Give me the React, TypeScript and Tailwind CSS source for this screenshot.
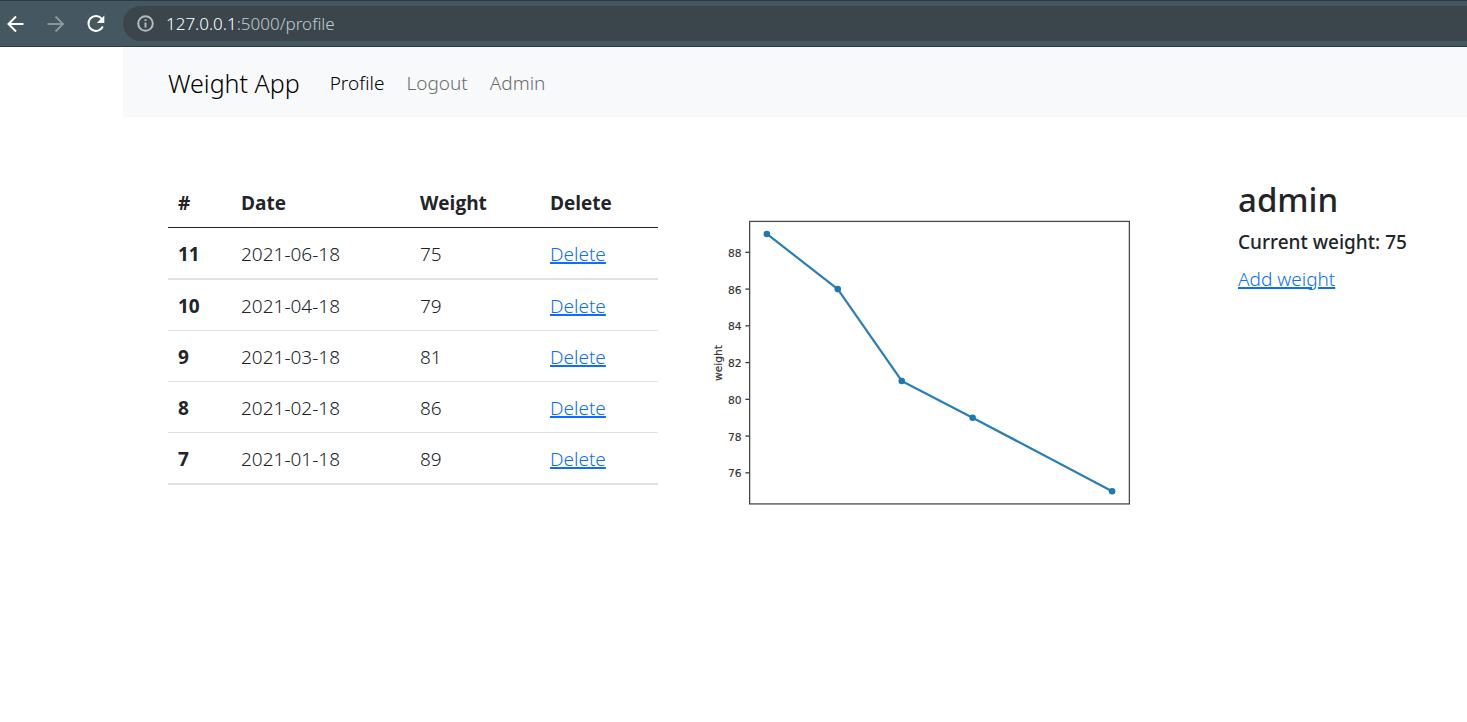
type Entry = { id: number; date: string; weight: number };

const entries: Entry[] = [
  { id: 11, date: "2021-06-18", weight: 75 },
  { id: 10, date: "2021-04-18", weight: 79 },
  { id: 9, date: "2021-03-18", weight: 81 },
  { id: 8, date: "2021-02-18", weight: 86 },
  { id: 7, date: "2021-01-18", weight: 89 },
];

const DAY = 86400000;

function BrowserBar() {
  return (
    <header className="flex h-[47px] items-center border-t border-b border-t-[#2f3a40] border-b-[#2d383e] bg-[#455761]">
      <div className="flex w-[123px] shrink-0 items-center gap-4 pl-1">
        <button type="button" aria-label="Back" className="text-white">
          <svg width="24" height="24" viewBox="0 0 24 24" fill="none" stroke="currentColor" strokeWidth="2">
            <path d="M19.5 12H4.8M12 4.5L4.5 12l7.500 7.500" />
          </svg>
        </button>
        <button type="button" aria-label="Forward" className="text-[#8b969c]">
          <svg width="24" height="24" viewBox="0 0 24 24" fill="none" stroke="currentColor" strokeWidth="2">
            <path d="M3.500 12h15.200M11.500 4.500L19 12l-7.500 7.500" />
          </svg>
        </button>
        <button type="button" aria-label="Reload" className="text-white">
          <svg width="24" height="24" viewBox="0 0 24 24" fill="none" stroke="currentColor" strokeWidth="2">
            <path d="M18 7A7.500 7.500 0 1 0 18.800 14.500" />
            <path d="M20.300 3.500v7.500h-7.500z" fill="currentColor" stroke="none" />
          </svg>
        </button>
      </div>
      <div className="flex h-[35px] min-w-0 grow items-center gap-3 rounded-l-full bg-[#3a464c] pl-[14px]">
        <svg width="17" height="17" viewBox="0 0 17 17" fill="none" stroke="#b5babd" strokeWidth="2" className="shrink-0" aria-hidden="true">
          <circle cx="8.500" cy="8.500" r="7.300" />
          <path d="M8.500 7.400v5M8.500 4.300v1.800" />
        </svg>
        <span className="text-[17px] leading-6 text-[#c4c9cc]">
          <span className="text-white">127.0.0.1</span>:5000/profile
        </span>
      </div>
    </header>
  );
}

function NavBar() {
  return (
    <nav className="flex h-[70px] items-center bg-[#f8f9fb] pt-[2px] pl-[45px]">
      <a href="#home" className="mr-[30px] text-[25px] leading-9 text-black">Weight App</a>
      <div className="flex gap-[22px] text-[19px] leading-7">
        <a href="#profile" className="text-black">Profile</a>
        <a href="#logout" className="text-[#6b6c6d]">Logout</a>
        <a href="#admin" className="text-[#6b6c6d]">Admin</a>
      </div>
    </nav>
  );
}

function WeightTable() {
  const head = "h-[51px] border-b border-[#212529] px-[10px] pt-[2px] text-left font-['Open_Sans',sans-serif] font-bold";
  return (
    <table className="w-full table-fixed border-separate border-spacing-0 text-[19px] leading-7">
      <colgroup>
        <col className="w-[63px]" />
        <col className="w-[179px]" />
        <col className="w-[130px]" />
        <col />
      </colgroup>
      <thead>
        <tr>
          <th scope="col" className={head}>#</th>
          <th scope="col" className={head}>Date</th>
          <th scope="col" className={head}>Weight</th>
          <th scope="col" className={head}>Delete</th>
        </tr>
      </thead>
      <tbody className="[&>tr>*]:border-b [&>tr>*]:border-[#dee2e6] [&>tr>*]:px-[10px] [&>tr>*]:pt-[2px] [&>tr:first-child>*]:border-b-2 [&>tr:last-child>*]:border-b-2">
        {entries.map((e) => (
          <tr key={e.id} className="h-[51px] first:h-[52px] last:h-[52px]">
            <th scope="row" className="text-left font-['Open_Sans',sans-serif] font-bold">{e.id}</th>
            <td>{e.date}</td>
            <td>{e.weight}</td>
            <td>
              <a href={`#delete-${e.id}`} className="text-[#0d6efd] underline decoration-2 underline-offset-1">Delete</a>
            </td>
          </tr>
        ))}
      </tbody>
    </table>
  );
}

function WeightChart() {
  const sorted = [...entries].reverse();
  const start = Date.parse(sorted[0].date);
  const span = Date.parse(sorted[sorted.length - 1].date) - start;
  const y = (w: number) => 74.4 + (89 - w) * 24;
  const points = sorted.map((e) => ({
    x: 103 + (450.9 * ((Date.parse(e.date) - start) / DAY)) / (span / DAY),
    y: y(e.weight),
  }));
  return (
    <svg viewBox="0 0 640 480" className="h-auto w-full font-['DejaVu_Sans',sans-serif] font-normal" role="img" aria-label="Weight over time">
      <rect x="80.500" y="58" width="496" height="369" fill="none" stroke="#4a4a4a" strokeWidth="1.700" />
      {[88, 86, 84, 82, 80, 78, 76].map((t) => (
        <g key={t}>
          <path d={`M75 ${y(t)}H80`} stroke="#3c3c3c" strokeWidth="1.700" />
          <text x="70" y={y(t) + 6} textAnchor="end" fontSize="14" fill="#333" stroke="#333" strokeWidth="0.200">{t}</text>
        </g>
      ))}
      <text transform="translate(44 243) rotate(-90)" textAnchor="middle" fontSize="14" fill="#333" stroke="#333" strokeWidth="0.200">weight</text>
      <polyline points={points.map((p) => `${p.x},${p.y}`).join(" ")} fill="none" stroke="#2a7fba" strokeWidth="2.900" strokeLinejoin="round" />
      {points.map((p) => (
        <circle key={p.x} cx={p.x} cy={p.y} r="4.300" fill="#1f77b4" />
      ))}
    </svg>
  );
}

export default function App() {
  return (
    <div className="min-h-screen bg-white font-['Noto_Sans',sans-serif] font-[350] text-[#212529]">
      <BrowserBar />
      <div className="pl-[123px]">
        <NavBar />
        <main className="grid grid-cols-[490fr_490fr_259fr] items-start gap-[30px] pt-[60px] pl-[45px]">
          <WeightTable />
          <WeightChart />
          <aside className="pt-px pl-[30px]">
            <h1 className="text-[33px] leading-[44px] font-medium">admin</h1>
            <p className="mt-1 text-[19px] leading-8 font-medium">Current weight: 75</p>
            <a href="#add" className="mt-[7px] block text-[19px] leading-7 text-[#0d6efd] underline decoration-2 underline-offset-1">Add weight</a>
          </aside>
        </main>
      </div>
    </div>
  );
}
